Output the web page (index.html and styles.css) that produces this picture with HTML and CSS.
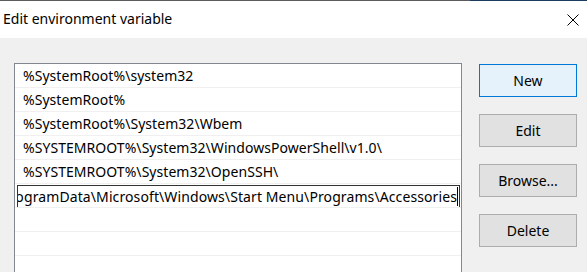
FILE: index.html
```html
<!DOCTYPE html>
<html>
<head>
<meta charset="utf-8">
<link rel="stylesheet" href="styles.css">
</head>
<body>
<div class="window">
  <div class="topline"><div class="topline-left"></div><div class="topline-right"></div></div>
  <div class="titlebar">
    <span class="title">Edit environment variable</span>
    <svg class="close" width="12" height="12" viewBox="0 0 12 12"><path d="M0.5 0.5L11.5 11.5M11.5 0.5L0.5 11.5" stroke="#000" stroke-width="1" fill="none"/></svg>
  </div>
  <div class="content">
    <div class="list">
      <div class="row">%SystemRoot%\system32</div>
      <div class="row">%SystemRoot%</div>
      <div class="row">%SystemRoot%\System32\Wbem</div>
      <div class="row">%SYSTEMROOT%\System32\WindowsPowerShell\v1.0\</div>
      <div class="row">%SYSTEMROOT%\System32\OpenSSH\</div>
      <div class="row row-edit">
        <div class="editbox"><span class="edittext">C:\ProgramData\Microsoft\Windows\Start Menu\Programs\Accessories</span><span class="caret"></span></div>
      </div>
      <div class="row"></div>
      <div class="row"></div>
      <div class="row"></div>
    </div>
    <div class="buttons">
      <div class="btn btn-default">New</div>
      <div class="btn">Edit</div>
      <div class="btn">Browse...</div>
      <div class="btn">Delete</div>
    </div>
  </div>
</div>
</body>
</html>
```
FILE: styles.css
```css
html, body {
  margin: 0;
  padding: 0;
}
body {
  width: 587px;
  height: 272px;
  overflow: hidden;
  background: #f0f0f0;
  font-family: "Noto Sans", "Open Sans", sans-serif;
  color: #000;
}
.window {
  width: 587px;
  height: 272px;
  overflow: hidden;
}
.topline {
  display: flex;
  height: 1px;
}
.topline-left {
  width: 470px;
  background: #5b5b5b;
}
.topline-right {
  flex: 1;
  background: #1b3c5e;
}
.titlebar {
  height: 37px;
  background: #fff;
  display: flex;
  align-items: center;
  padding-left: 3px;
  padding-right: 8px;
}
.title {
  font-size: 14px;
  flex: 1;
  line-height: 16px;
  margin-top: -1px;
}
.close {
  display: block;
}
.content {
  display: flex;
  padding-top: 25px;
  padding-left: 14px;
}
.list {
  width: 448px;
  height: 240px;
  box-sizing: border-box;
  border: 1px solid #828790;
  border-bottom: none;
  background: #fff;
  flex-shrink: 0;
}
.row {
  height: 24px;
  box-sizing: border-box;
  border-bottom: 1px solid #f0f0f0;
  padding-left: 8px;
  font-size: 14px;
  letter-spacing: 0.05px;
  line-height: 23px;
  white-space: nowrap;
  overflow: hidden;
}
.row-edit {
  padding: 1px 1px 0 2px;
}
.editbox {
  height: 23px;
  box-sizing: border-box;
  border: 1px solid #333;
  display: flex;
  justify-content: flex-end;
  align-items: center;
  overflow: hidden;
  padding-right: 1px;
  background: #fff;
}
.edittext {
  white-space: nowrap;
  flex-shrink: 0;
  line-height: 21px;
  letter-spacing: 0.1px;
}
.caret {
  width: 1px;
  height: 19px;
  background: #000;
  flex-shrink: 0;
}
.buttons {
  margin-left: 17px;
  display: flex;
  flex-direction: column;
  gap: 17px;
  padding-top: 1px;
}
.btn {
  width: 98px;
  height: 33px;
  box-sizing: border-box;
  border: 1px solid #adadad;
  background: #e1e1e1;
  font-size: 14px;
  display: flex;
  align-items: center;
  justify-content: center;
}
.btn-default {
  border-color: #0078d7;
  background: #e5f1fb;
}
```
